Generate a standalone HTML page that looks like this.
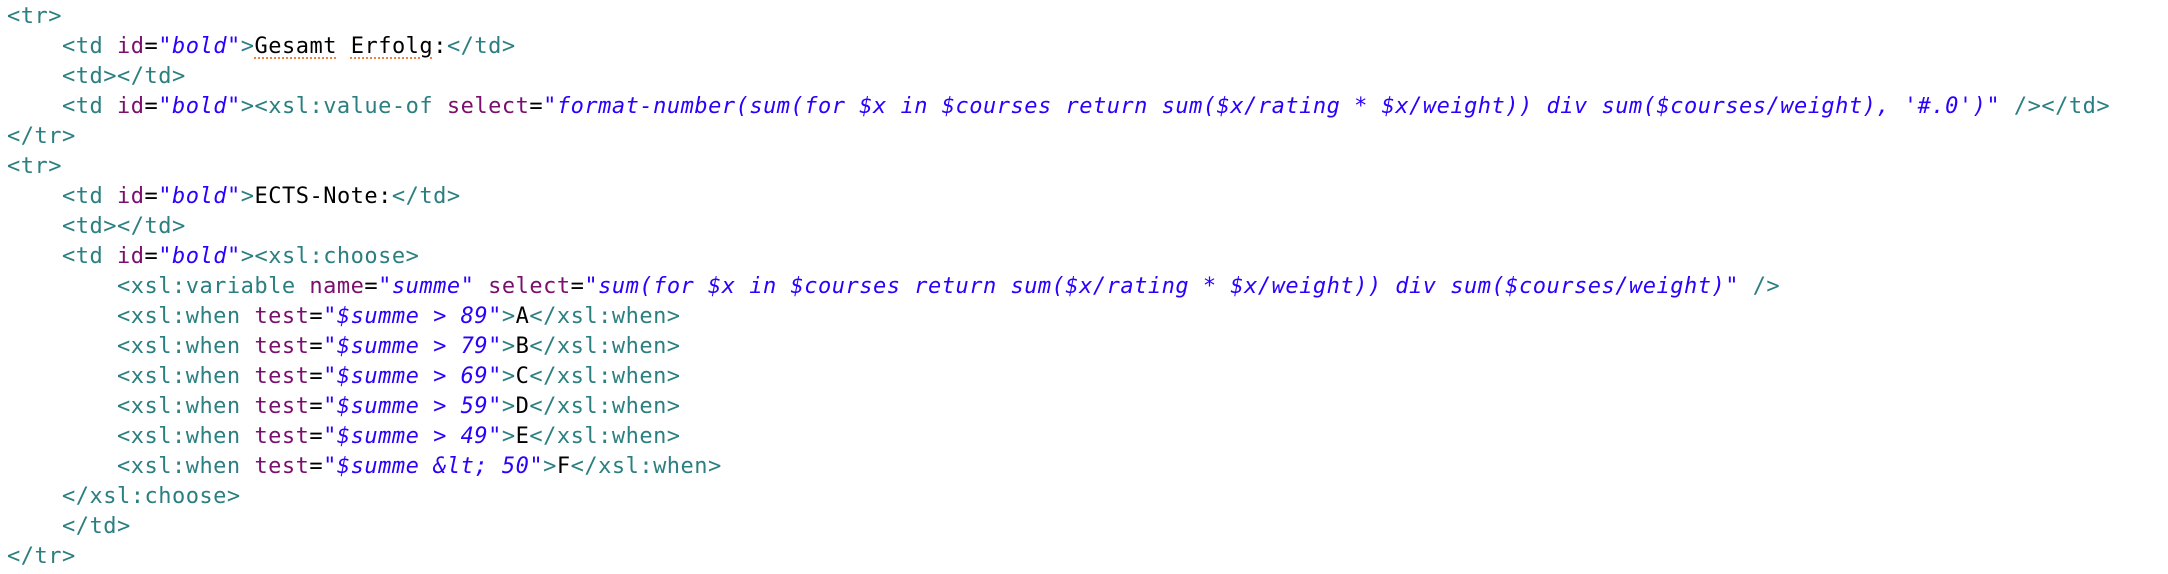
<!DOCTYPE html>
<html><head><meta charset="utf-8"><style>
html,body{margin:0;padding:0;background:#fff;width:2168px;height:574px;overflow:hidden}
pre{margin:0;padding:2px 0 0 7px;font-family:"DejaVu Sans Mono","Liberation Mono",monospace;font-size:22px;letter-spacing:0.5px;line-height:30px;color:#000}
.t{color:#2b7f80}.a{color:#7a0f6e}.v{color:#2a00ff;font-style:italic}
.u{text-decoration:underline dotted #f08040;text-decoration-thickness:2px;text-underline-offset:4px}
</style></head><body><pre><span class="t">&lt;tr&gt;</span>
    <span class="t">&lt;td</span> <span class="a">id</span>=<span class="v">"bold"</span><span class="t">&gt;</span><span class="u">Gesamt</span> <span class="u">Erfolg</span>:<span class="t">&lt;/td&gt;</span>
    <span class="t">&lt;td&gt;&lt;/td&gt;</span>
    <span class="t">&lt;td</span> <span class="a">id</span>=<span class="v">"bold"</span><span class="t">&gt;&lt;xsl:value-of</span> <span class="a">select</span>=<span class="v">"format-number(sum(for $x in $courses return sum($x/rating * $x/weight)) div sum($courses/weight), '#.0')"</span> <span class="t">/&gt;&lt;/td&gt;</span>
<span class="t">&lt;/tr&gt;</span>
<span class="t">&lt;tr&gt;</span>
    <span class="t">&lt;td</span> <span class="a">id</span>=<span class="v">"bold"</span><span class="t">&gt;</span>ECTS-Note:<span class="t">&lt;/td&gt;</span>
    <span class="t">&lt;td&gt;&lt;/td&gt;</span>
    <span class="t">&lt;td</span> <span class="a">id</span>=<span class="v">"bold"</span><span class="t">&gt;&lt;xsl:choose&gt;</span>
        <span class="t">&lt;xsl:variable</span> <span class="a">name</span>=<span class="v">"summe"</span> <span class="a">select</span>=<span class="v">"sum(for $x in $courses return sum($x/rating * $x/weight)) div sum($courses/weight)"</span> <span class="t">/&gt;</span>
        <span class="t">&lt;xsl:when</span> <span class="a">test</span>=<span class="v">"$summe &gt; 89"</span><span class="t">&gt;</span>A<span class="t">&lt;/xsl:when&gt;</span>
        <span class="t">&lt;xsl:when</span> <span class="a">test</span>=<span class="v">"$summe &gt; 79"</span><span class="t">&gt;</span>B<span class="t">&lt;/xsl:when&gt;</span>
        <span class="t">&lt;xsl:when</span> <span class="a">test</span>=<span class="v">"$summe &gt; 69"</span><span class="t">&gt;</span>C<span class="t">&lt;/xsl:when&gt;</span>
        <span class="t">&lt;xsl:when</span> <span class="a">test</span>=<span class="v">"$summe &gt; 59"</span><span class="t">&gt;</span>D<span class="t">&lt;/xsl:when&gt;</span>
        <span class="t">&lt;xsl:when</span> <span class="a">test</span>=<span class="v">"$summe &gt; 49"</span><span class="t">&gt;</span>E<span class="t">&lt;/xsl:when&gt;</span>
        <span class="t">&lt;xsl:when</span> <span class="a">test</span>=<span class="v">"$summe &amp;lt; 50"</span><span class="t">&gt;</span>F<span class="t">&lt;/xsl:when&gt;</span>
    <span class="t">&lt;/xsl:choose&gt;</span>
    <span class="t">&lt;/td&gt;</span>
<span class="t">&lt;/tr&gt;</span></pre></body></html>
